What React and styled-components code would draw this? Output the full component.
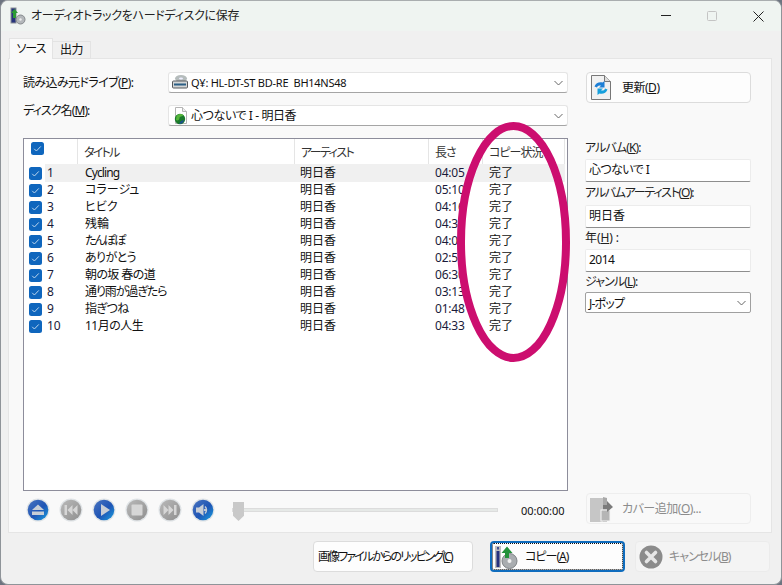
import React from 'react';
import styled, { createGlobalStyle } from 'styled-components';

const Global = createGlobalStyle`
  html, body { margin: 0; padding: 0; width: 782px; height: 585px; overflow: hidden; background: #6d7480; }
  * { box-sizing: border-box; }
  body { font-family: "Noto Sans", "Noto Sans CJK JP", sans-serif; font-size: 12px; color: #111; font-feature-settings: "palt"; }
`;

const Win = styled.div`
  position: relative; width: 782px; height: 585px; background: #f0f0f0;
  border-radius: 8px; border: 1px solid #8f9499; border-top-color: #a9adaf; overflow: hidden;
  display: flex; flex-direction: column;
`;
const TitleBar = styled.div`
  height: 30px; background: #eff4f1; display: flex; align-items: center; padding-left: 8px; flex: none;
`;
const TitleText = styled.div`font-size: 12px; color: #222; white-space: nowrap; flex: 1; line-height: 16px; margin-left: 5px; letter-spacing: -0.3px;`;
const WinBtn = styled.div`width: 46px; height: 30px; display: flex; align-items: center; justify-content: center; color: #222;`;
const Body = styled.div`flex: 1; display: flex; flex-direction: column; padding: 7px 9px 0 7px; min-height: 0;`;
const Tabs = styled.div`display: flex; align-items: flex-end; height: 21px; flex: none; position: relative; z-index: 1; margin: 0 0 -1px 1px;`;
const Tab = styled.div`
  display: flex; align-items: center; justify-content: center; line-height: 16px; letter-spacing: ${p => p.$ls}px;
  width: ${p => p.$w}px; height: ${p => (p.$on ? 21 : 18)}px;
  background: ${p => (p.$on ? '#f9f9f9' : '#f0f0f0')};
  border: 1px solid #e3e3e3; border-bottom: ${p => (p.$on ? '0' : '1px solid #e3e3e3')};
  border-left-width: ${p => (p.$on ? 1 : 0)}px;
`;
const Panel = styled.div`
  height: 475px; flex: none; background: #f9f9f9; border: 1px solid #e5e5e5;
  display: grid; grid-template-columns: 545px 1fr; padding: 13px 20px 0 14px; column-gap: 17px;
`;
const LeftCol = styled.div`display: flex; flex-direction: column; min-width: 0;`;
const RightCol = styled.div`display: flex; flex-direction: column; min-width: 0;`;
const FormRow = styled.div`display: flex; height: 21px; margin-bottom: 12px; align-items: ${p => p.$top ? 'flex-start' : 'center'};`;
const DriveLabel = styled.div`
  width: 145px; flex: none; line-height: 16px; white-space: nowrap; margin-top: ${p => p.$up ? -2 : 0}px; letter-spacing: ${p => p.$ls}px;
`;
const Combo = styled.div`
  flex: 1; height: 21px; background: #fff; border: 1px solid #e5e5e5; border-bottom-color: #a5a5a5; border-radius: 3px;
  display: flex; align-items: center; padding: 0 4px 0 2px; gap: 2px; line-height: 16px; white-space: nowrap;
`;
const ComboText = styled.span`flex: 1; font-size: ${p => p.$s || 12}px; letter-spacing: ${p => p.$ls || 0}px;`;
const Acc = styled.span`text-decoration: underline; text-underline-offset: 1px;`;
const ListBox = styled.div`
  height: 353px; background: #fff; border: 1px solid #8d8d9b; display: flex; flex-direction: column; overflow: hidden;
`;
const Cols = `display: grid; grid-template-columns: 54px 217px 134px 54px 82px;`;
const HeaderRow = styled.div`${Cols} height: 25px; flex: none;`;
const HeadCell = styled.div`
  display: flex; align-items: center; padding-left: 6px; padding-top: 2px; line-height: 16px;
  border-right: 1px solid #e5e5e5; color: #333; white-space: nowrap; letter-spacing: ${p => p.$ls || 0}px;
`;
const HeadCheck = styled(HeadCell)`align-items: flex-start; padding-top: 3px; padding-left: 7px;`;
const Row = styled.div`${Cols} height: 17px; flex: none; line-height: 18px; white-space: nowrap;`;
const CheckCell = styled.div`display: flex; align-items: center; padding-left: 5px; gap: 3px;`;
const Num = styled.span`flex: 1; align-self: stretch; padding-left: 2px; color: #1a1a3a; background: ${p => p.$on ? '#f0f0f0' : 'transparent'};`;
const Cell = styled.div`
  padding-left: ${p => p.$pl ?? 6}px; background: ${p => p.$on ? '#f0f0f0' : 'transparent'}; color: ${p => p.$c || '#111'};
  overflow: hidden; letter-spacing: ${p => p.$ls || 0}px;
`;
const Transport = styled.div`display: flex; align-items: center; height: 24px; margin-top: 7px; padding-left: 3px;`;
const TBtn = styled.div`width: 33px; flex: none; height: 24px;`;
const Slider = styled.div`position: relative; width: 266px; height: 4px; margin-left: 8px; background: #e6e9e7; border: 1px solid #dcdcdc;`;
const Thumb = styled.div`
  position: absolute; left: 0; top: -7px; width: 11px; height: 19px; background: #c9c9c9;
  clip-path: polygon(0 0, 100% 0, 100% 72%, 50% 100%, 0 72%);
`;
const Time = styled.div`margin-left: 23px; font-size: 11px; color: #111;`;
const SideBtn = styled.div`
  width: 165px; height: 31px; flex: none; margin-top: ${p => p.$mt || 0}px; margin-left: 1px; background: ${p => p.$off ? '#f9f9f9' : '#fdfdfd'};
  border: 1px solid ${p => p.$off ? '#eeeeee' : '#dcdcdc'}; border-radius: 4px; display: flex; align-items: center; padding-left: ${p => p.$pl}px; gap: ${p => p.$gap}px;
  color: ${p => p.$off ? '#8c8c8c' : '#111'}; line-height: 16px; white-space: nowrap; letter-spacing: ${p => p.$ls}px;
`;
const FieldLabel = styled.div`
  height: ${p => p.$h}px; line-height: 16px; padding-top: ${p => p.$pt}px; margin-top: ${p => p.$mt || 0}px; color: #222;
  white-space: nowrap; letter-spacing: ${p => p.$ls}px;
`;
const Input = styled.div`
  width: 166px; height: 23px; background: #fff; border: 1px solid #ececec; border-bottom-color: #8e8e8e; border-radius: 2px;
  line-height: 16px; padding: 2px 3px 0; white-space: nowrap; letter-spacing: ${p => p.$ls || 0}px;
`;
const Select = styled.div`
  width: 166px; height: 21px; background: #fff; border: 1px solid #a0a0a0; border-radius: 2px; letter-spacing: -0.8px;
  display: flex; align-items: center; padding: 0 4px 0 3px; justify-content: space-between;
`;
const Footer = styled.div`flex: 1; display: flex; justify-content: flex-end; padding: 8px 2px 0 0; gap: 10px;`;
const FootBtn = styled.div`
  width: ${p => p.$w}px; height: 31px; margin-right: ${p => p.$mr || 0}px; flex: none; border-radius: 4px;
  background: ${p => p.$off ? '#f4f4f4' : '#fdfdfd'};
  border: 1px solid ${p => p.$off ? '#ebebeb' : '#dcdcdc'};
  display: flex; align-items: center; white-space: nowrap; line-height: 16px; letter-spacing: ${p => p.$ls}px;
  color: ${p => p.$off ? '#8c8c8c' : '#111'}; padding-left: ${p => p.$pl || 3}px; gap: ${p => p.$gap || 0}px;
  ${p => p.$focus && `border: 2px solid #0f6cbd; outline: 1px dotted #111; outline-offset: -3px; padding-left: 2px;`}
`;
const Overlay = styled.svg`position: absolute; left: -1px; top: -1px; pointer-events: none;`;

const Chevron = () => (
  <svg width="9" height="6" viewBox="0 0 9 6" style={{ flex: 'none' }}><path d="M.5 1l4 4 4-4" fill="none" stroke="#666" strokeWidth="1" /></svg>
);
const Check = ({ size = 13 }) => (
  <svg width={size} height={size} viewBox="0 0 13 13" style={{ flex: 'none' }}>
    <rect width="13" height="13" rx="2.5" fill="#0f66bd" />
    <path d="M3.2 6.8l2.2 2.2 4.4-4.6" fill="none" stroke="#bcd6ee" strokeWidth="1" />
  </svg>
);
const Orb = ({ on, children }) => (
  <svg width="24" height="24" viewBox="0 0 24 24">
    <defs>
      <linearGradient id="ob" x1="0" y1="0" x2="1" y2="1">
        <stop offset="0" stopColor="#4a74bf" /><stop offset=".55" stopColor="#1f55b5" /><stop offset="1" stopColor="#18a0e0" />
      </linearGradient>
      <linearGradient id="og" x1="0" y1="0" x2="1" y2="1">
        <stop offset="0" stopColor="#b9b9b9" /><stop offset="1" stopColor="#8f8f8f" />
      </linearGradient>
    </defs>
    <circle cx="12" cy="12" r="11.5" fill="#dfe3e6" />
    <circle cx="12" cy="12" r="10.3" fill={on ? 'url(#ob)' : 'url(#og)'} />
    <g fill={on ? '#c7cdd6' : '#d6d6d6'}>{children}</g>
  </svg>
);
const Eject = () => <Orb on><path d="M12 6.500l6 5.500H6z" /><rect x="6" y="13.500" width="12" height="3.500" /></Orb>;
const Prev = () => <Orb><rect x="5.500" y="7" width="2.500" height="10" /><path d="M13.500 7v10L8.500 12zM18.500 7v10l-5-5z" /></Orb>;
const Play = () => <Orb on><path d="M9 6l9 6-9 6z" /></Orb>;
const Stop = () => <Orb><rect x="6.500" y="6.500" width="11" height="11" rx="1" /></Orb>;
const Next = () => <Orb><rect x="16" y="7" width="2.500" height="10" /><path d="M10.500 7v10l5-5zM5.500 7v10l5-5z" /></Orb>;
const Speaker = () => (
  <Orb on>
    <path d="M5 9.500h3L12.500 6v12L8 14.500H5z" />
    <path d="M14 8.500a5 5 0 0 1 0 7" fill="none" stroke="#c7cdd6" strokeWidth="1.500" />
    <circle cx="14" cy="12" r="1.200" />
  </Orb>
);
const DriveIcon = () => (
  <svg width="18" height="17" viewBox="0 0 18 17" style={{ flex: 'none' }}>
    <ellipse cx="10" cy="4.500" rx="6" ry="3.500" fill="#b5bcbc" />
    <ellipse cx="10" cy="4.500" rx="2" ry="1" fill="#eef" />
    <rect x="1.500" y="7" width="15" height="7" rx="1" fill="#d4d6d6" stroke="#55585c" />
    <rect x="3" y="9.500" width="12" height="2" fill="#2b5f86" />
  </svg>
);
const DiscDoc = () => (
  <svg width="18" height="20" viewBox="0 0 18 20" style={{ flex: 'none' }}>
    <path d="M4.500 1.500h7l4 4v12h-11z" fill="#fff" stroke="#b5b5b5" />
    <path d="M11.500 1.500v4h4" fill="#eee" stroke="#b5b5b5" />
    <circle cx="9" cy="13" r="5.200" fill="#1a7a2b" />
    <path d="M5.500 10a5 5 0 0 1 7-1c-1 2-4 1-4 3s-2 3-3.500 2z" fill="#55b53a" />
    <path d="M8 18a5 5 0 0 0 5-4l-3 1z" fill="#1d4f8f" />
  </svg>
);
const Refresh = () => (
  <svg width="20" height="25" viewBox="0 0 20 25" style={{ flex: 'none' }}>
    <path d="M.500.500h13l6 6v18H.500z" fill="#f1f1f1" stroke="#777" />
    <path d="M13.500.500v6h6" fill="#ddd" stroke="#777" />
    <path d="M3.500 11.500c1-3.500 5-5 8-4l2-1.500v6.500H8l2-1.800c-2-.7-3.500 0-4 1.800z" fill="#1d7fd6" />
    <path d="M16.500 14.500c-1 3.500-5 5-8 4l-2 1.500v-6.500H12l-2 1.800c2 .7 3.500 0 4-1.800z" fill="#16a0dd" />
  </svg>
);
const AppIcon = () => (
  <svg width="17" height="18" viewBox="0 0 17 18" style={{ flex: 'none' }}>
    <rect x="2" y="1" width="5" height="15" fill="#27347c" stroke="#8a8f95" />
    <path d="M4 11V6H2l3.500-4L9 6H7v5z" fill="#2c9b35" />
    <circle cx="11.500" cy="12.500" r="4.500" fill="#b4b8bb" stroke="#85898c" />
    <circle cx="11.500" cy="12.500" r="1.200" fill="#eee" />
  </svg>
);
const CopyIcon = () => (
  <svg width="24" height="24" viewBox="0 0 24 24" style={{ flex: 'none' }}>
    <rect x="1" y="1" width="6" height="22" fill="#bdbdbd" />
    <rect x="2.500" y="6" width="3" height="16" fill="#26317e" />
    <rect x="3" y="2" width="2" height="2.500" fill="#44508f" />
    <circle cx="15.500" cy="16" r="7.500" fill="#a9adb0" stroke="#7f8386" />
    <circle cx="15.500" cy="16" r="2" fill="#f2f2f2" />
    <path d="M11 13V8H7.500L13 1.500 18.500 8H15v5z" fill="#23913a" />
  </svg>
);
const CancelIcon = () => (
  <svg width="24" height="24" viewBox="0 0 24 24" style={{ flex: 'none' }}>
    <circle cx="12" cy="12" r="11.500" fill="#8b8b8b" />
    <path d="M7.500 7.500l9 9M16.500 7.500l-9 9" stroke="#e6e6e6" strokeWidth="3.600" strokeLinecap="round" />
  </svg>
);
const CoverIcon = () => (
  <svg width="24" height="26" viewBox="0 0 24 26" style={{ flex: 'none' }}>
    <path d="M0 2h17v24H0z" fill="#c6c6c6" />
    <path d="M13 1l4 1v24h-4z" fill="#a9a9a9" />
    <rect x="11" y="14" width="9" height="11" fill="#b5b5b5" stroke="#f5f5f5" />
    <path d="M13 9h4V5l6 6-6 5v-3h-4z" fill="#7b7b7b" />
  </svg>
);

const tracks = [
  ['Cycling', '04:05', -0.9], ['コラージュ', '05:10', 0], ['ヒビク', '04:16', 0], ['残輪', '04:32', 0], ['たんぽぽ', '04:01', -2],
  ['ありがとう', '02:57', -0.6], ['朝の坂 春の道', '06:30', -0.6], ['通り雨が過ぎたら', '03:13', -1.1], ['指ぎつね', '01:48', -0.6], ['11月の人生', '04:33', -0.5],
];

export default function App() {
  return (
    <Win>
      <Global />
      <TitleBar>
        <AppIcon />
        <TitleText>オーディオトラックをハードディスクに保存</TitleText>
        <WinBtn><svg width="10" height="2"><rect width="10" height="1" fill="#222" /></svg></WinBtn>
        <WinBtn><svg width="10" height="10"><rect x=".5" y=".5" width="9" height="9" rx="1" fill="none" stroke="#c4c4c4" /></svg></WinBtn>
        <WinBtn><svg width="11" height="11"><path d="M.5.500l10 10M10.500.500l-10 10" stroke="#222" /></svg></WinBtn>
      </TitleBar>
      <Body>
        <Tabs>
          <Tab $on $w={44} $ls={-1}>ソース</Tab>
          <Tab $w={38} $ls={-0.5}>出力</Tab>
        </Tabs>
        <Panel>
          <LeftCol>
            <FormRow><DriveLabel $ls={-0.6}>読み込み元ドライブ(<Acc>P</Acc>):</DriveLabel>
              <Combo><DriveIcon /><ComboText $s={11} $ls={-0.25}>Q¥: HL-DT-ST BD-RE&nbsp; BH14NS48</ComboText><Chevron /></Combo>
            </FormRow>
            <FormRow $top><DriveLabel $up $ls={-0.9}>ディスク名(<Acc>M</Acc>):</DriveLabel>
              <Combo><DiscDoc /><ComboText $ls={-0.4}>心つないで I - 明日香</ComboText><Chevron /></Combo>
            </FormRow>
            <ListBox>
              <HeaderRow>
                <HeadCheck><Check /></HeadCheck>
                <HeadCell $ls={-1.7}>タイトル</HeadCell>
                <HeadCell $ls={-1.6}>アーティスト</HeadCell>
                <HeadCell $ls={-1}>長さ</HeadCell>
                <HeadCell $ls={-1}>コピー状況</HeadCell>
              </HeaderRow>
              {tracks.map(([t, d, ls], i) => (
                <Row key={i}>
                  <CheckCell><Check /><Num $on={i === 0}>{i + 1}</Num></CheckCell>
                  <Cell $on={i === 0} $pl={7} $ls={ls}>{t}</Cell>
                  <Cell $on={i === 0} $pl={5}>明日香</Cell>
                  <Cell $on={i === 0} $c="#1a1a3a" $ls={-0.2}>{d}</Cell>
                  <Cell $on={i === 0}>完了</Cell>
                </Row>
              ))}
            </ListBox>
            <Transport>
              <TBtn><Eject /></TBtn><TBtn><Prev /></TBtn><TBtn><Play /></TBtn><TBtn><Stop /></TBtn><TBtn><Next /></TBtn><TBtn><Speaker /></TBtn>
              <Slider><Thumb /></Slider>
              <Time>00:00:00</Time>
            </Transport>
          </LeftCol>
          <RightCol>
            <SideBtn $pl={4} $gap={11} $ls={-0.5}><Refresh /><span>更新(<Acc>D</Acc>)</span></SideBtn>
            <FieldLabel $mt={37} $h={19} $pt={0} $ls={-0.9}>アルバム(<Acc>K</Acc>):</FieldLabel>
            <Input $ls={-0.6}>心つないで I</Input>
            <FieldLabel $h={23} $pt={3} $ls={-1.3}>アルバムアーティスト(<Acc>O</Acc>):</FieldLabel>
            <Input>明日香</Input>
            <FieldLabel $h={21} $pt={2} $ls={-0.1}>年(<Acc>H</Acc>) :</FieldLabel>
            <Input $ls={-0.5}>2014</Input>
            <FieldLabel $h={20} $pt={2} $ls={-0.9}>ジャンル(<Acc>L</Acc>):</FieldLabel>
            <Select><span>J-ポップ</span><Chevron /></Select>
            <SideBtn $off $mt={180} $pl={3} $gap={8} $ls={-0.5}><CoverIcon /><span>カバー追加(<Acc>O</Acc>)...</span></SideBtn>
          </RightCol>
        </Panel>
        <Footer>
          <FootBtn $w={160} $mr={7} $pl={4} $ls={-1.9}><span>画像ファイルからのリッピング(<Acc>C</Acc>)</span></FootBtn>
          <FootBtn $w={135} $focus $gap={7} $ls={-1}><CopyIcon /><span>コピー(<Acc>A</Acc>)</span></FootBtn>
          <FootBtn $w={135} $off $gap={6} $ls={-1}><CancelIcon /><span>キャンセル(<Acc>B</Acc>)</span></FootBtn>
        </Footer>
      </Body>
      <Overlay width="782" height="585" viewBox="0 0 782 585">
        <ellipse cx="513.500" cy="242" rx="52.500" ry="116" fill="none" stroke="#cc0e6f" strokeWidth="8" />
      </Overlay>
    </Win>
  );
}
